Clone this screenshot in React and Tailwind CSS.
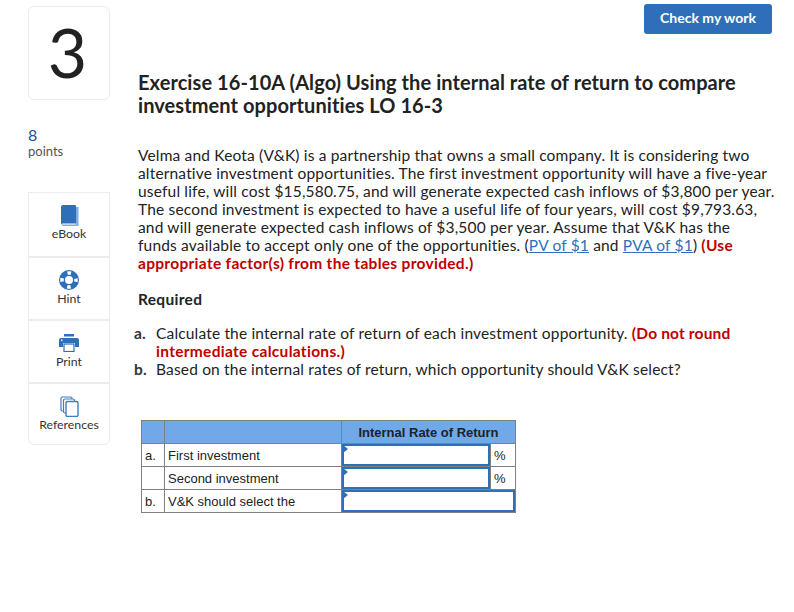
// App.jsx — homework question page

const font = "font-['Lato','Open_Sans',sans-serif]";

function BookIcon() {
    return (
        <svg width="19" height="21" viewBox="0 0 19 21">
            <path d="M16 2h2.500v19H3.500A3 3 0 0 1 1 19.500h15z" fill="#7fabe2" />
            <path d="M3 0h12a1 1 0 0 1 1 1v17.500H3a2 2 0 0 0-2 1V2a2 2 0 0 1 2-2z" fill="#2f6fba" />
        </svg>
    );
}

function HintIcon() {
    return (
        <svg width="20" height="20" viewBox="0 0 20 20">
            <circle cx="10" cy="10" r="7" fill="none" stroke="#2f6fba" strokeWidth="6" />
            <circle cx="10" cy="10" r="7" fill="none" stroke="#fff" strokeWidth="3.500" strokeDasharray="3.500 7.500" strokeDashoffset="1.750" />
        </svg>
    );
}

function PrintIcon() {
    return (
        <svg width="20" height="18" viewBox="0 0 20 18">
            <rect x="5" y="0" width="10" height="2.500" fill="#2f6fba" />
            <path d="M2 4h16a2 2 0 0 1 2 2v7h-4V9H4v4H0V6a2 2 0 0 1 2-2z" fill="#2f6fba" />
            <rect x="5" y="10" width="10" height="7.500" fill="#fff" stroke="#2f6fba" strokeWidth="1.200" />
            <rect x="2" y="5.500" width="1.500" height="1.500" fill="#fff" />
        </svg>
    );
}

function RefIcon() {
    return (
        <svg width="19" height="21" viewBox="0 0 19 21" fill="#fff" stroke="#3f7cc4" strokeWidth="1.200">
            <rect x="1" y="1" width="11" height="14" rx="1.500" />
            <rect x="3.500" y="3" width="11" height="14" rx="1.500" />
            <rect x="6" y="5.500" width="12" height="15" rx="1.500" strokeWidth="1.400" />
        </svg>
    );
}

const tools = [
    { label: "eBook", icon: BookIcon, box: "h-[65px]" },
    { label: "Hint", icon: HintIcon, box: "h-[63px]" },
    { label: "Print", icon: PrintIcon, box: "h-[63px]" },
    { label: "References", icon: RefIcon, box: "h-[62px] rounded-b-md" },
];

function Answer() {
    return (
        <div className="relative h-[22px] border-2 border-[#2f6fba] bg-white">
            <span className="absolute left-[-1px] top-[-1px] border-y-[4px] border-l-[5px] border-y-transparent border-l-[#2f6fba]" />
        </div>
    );
}

function AnswerTable() {
    const cell = "border border-[#808080] px-[3px]";
    return (
        <table className="ml-[3px] mt-[42px] h-[93px] w-[374px] table-fixed border-collapse font-['Liberation_Sans',sans-serif] text-[13px] leading-none text-[#222]">
            <colgroup>
                <col className="w-[23px]" />
                <col className="w-[177px]" />
                <col className="w-[149px]" />
                <col className="w-[25px]" />
            </colgroup>
            <tbody>
                <tr className="h-[23px] bg-[#70a8e8]">
                    <td className={cell}></td>
                    <td className={cell}></td>
                    <td colSpan={2} className={`${cell} text-center font-bold`}>Internal Rate of Return</td>
                </tr>
                <tr className="h-[23px]">
                    <td className={cell}>a.</td>
                    <td className={cell}>First investment</td>
                    <td className="border border-[#808080] p-0"><Answer /></td>
                    <td className={cell}>%</td>
                </tr>
                <tr className="h-[23px]">
                    <td className={cell}></td>
                    <td className={cell}>Second investment</td>
                    <td className="border border-[#808080] p-0"><Answer /></td>
                    <td className={cell}>%</td>
                </tr>
                <tr className="h-[23px]">
                    <td className={cell}>b.</td>
                    <td className={cell}>V&amp;K should select the</td>
                    <td colSpan={2} className="border border-[#808080] p-0"><Answer /></td>
                </tr>
            </tbody>
        </table>
    );
}

export default function App() {
    return (
        <div className={`${font} flex h-[612px] w-[794px] overflow-hidden bg-white pl-[28px] text-[#222] [font-variant-ligatures:none]`}>
            {/* Sidebar */}
            <aside className="w-[82px] shrink-0 pt-[6px]">
                <div className="flex h-[94px] items-center justify-center rounded-md border border-[#ececec] pb-[3px] pr-[3px] text-[68px] leading-none text-[#222]">
                    3
                </div>
                <div className="mt-[25px] text-[16px] leading-[20px] text-[#1d4f91]">8</div>
                <div className="-mt-[2px] text-[13px] leading-[16px] text-[#555]">points</div>
                <div className="mt-[33px]">
                    {tools.map(({ label, icon: Icon, box }) => (
                        <div key={label} className={`flex flex-col items-center border border-[#ececec] pt-[11px] ${box}`}>
                            <div className="flex h-[22px] items-center"><Icon /></div>
                            <span className="text-[12.300px] leading-[16px] text-[#333]">{label}</span>
                        </div>
                    ))}
                </div>
            </aside>

            {/* Question */}
            <main className="ml-[28px] flex-1">
                <div className="flex justify-end pt-[4px] pr-[22px]">
                    <button className="h-[30px] w-[128px] rounded-[3px] bg-[#2f6fba] pb-[3px] text-[14px] font-bold text-white">
                        Check my work
                    </button>
                </div>
                <h1 className="mt-[37px] text-[20px] font-bold leading-[23px] tracking-[0.08px] text-[#222]">
                    Exercise 16-10A (Algo) Using the internal rate of return to compare<br />
                    investment opportunities LO 16-3
                </h1>
                <div className="text-[15.500px] leading-[18px] tracking-[0.17px]">
                    <p className="mt-[29px] whitespace-nowrap text-[#222]">
                        Velma and Keota (V&amp;K) is a partnership that owns a small company. It is considering two<br />
                        alternative investment opportunities. The first investment opportunity will have a five-year<br />
                        useful life, will cost $15,580.75, and will generate expected cash inflows of $3,800 per year.<br />
                        The second investment is expected to have a useful life of four years, will cost $9,793.63,<br />
                        and will generate expected cash inflows of $3,500 per year. Assume that V&amp;K has the<br />
                        funds available to accept only one of the opportunities. (<span className="text-[#2f6fba] underline">PV of $1</span> and <span className="text-[#2f6fba] underline">PVA of $1</span>) <b className="text-[#c00000] tracking-[0.3px]">(Use<br />
                        appropriate factor(s) from the tables provided.)</b>
                    </p>
                    <h2 className="mt-[18px] font-bold tracking-[0.3px]">Required</h2>
                    <ol className="mt-[16px]">
                        <li className="-ml-[4px] flex">
                            <b className="w-[22px] shrink-0 text-[#333]">a.</b>
                            <span>Calculate the internal rate of return of each investment opportunity. <b className="text-[#c00000]">(Do not round<br /><span className="tracking-[0.3px]">intermediate calculations.)</span></b></span>
                        </li>
                        <li className="-ml-[4px] flex">
                            <b className="w-[22px] shrink-0 text-[#333]">b.</b>
                            <span>Based on the internal rates of return, which opportunity should V&amp;K select?</span>
                        </li>
                    </ol>
                </div>
                <AnswerTable />
            </main>
        </div>
    );
}
